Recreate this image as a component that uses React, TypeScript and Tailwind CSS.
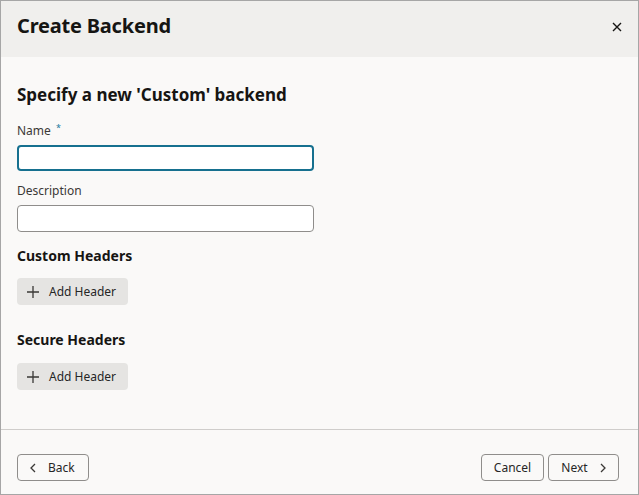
import React from 'react';

const font = { fontFamily: '"Noto Sans", "Open Sans", sans-serif' };

const PlusIcon = () => (
    <svg width="14" height="14" viewBox="0 0 14 14" fill="none" stroke="#3a3836" strokeWidth="1.3">
        <path d="M7 1v12M1 7h12" />
    </svg>
);

const AddHeaderButton = () => (
    <button className="flex items-center gap-[9px] h-[27px] w-[111px] pl-[9px] bg-[#e5e4e2] rounded-[4px] text-[12px] text-[#262626]">
        <PlusIcon />
        <span>Add Header</span>
    </button>
);

export default function App() {
    return (
        <div style={font} className="w-[639px] h-[495px] border border-[#a6a6a6] bg-[#faf9f8] flex flex-col text-[#161513]">
            {/* header */}
            <div className="h-[56px] bg-[#f0efed] flex items-center justify-between pl-4 pr-[16px]">
                <h1 className="text-[20px] font-bold tracking-[-0.2px] -mt-[6px]">Create Backend</h1>
                <button className="-mt-[5px] text-[#161513]">
                    <svg width="10" height="10" viewBox="0 0 10 10" stroke="currentColor" strokeWidth="1.4">
                        <path d="M1 1l8 8M9 1l-8 8" />
                    </svg>
                </button>
            </div>

            {/* body */}
            <div className="flex-1 px-4 pt-[26px] flex flex-col">
                <h2 className="text-[17px] leading-[24px] font-bold">Specify a new 'Custom' backend</h2>

                <label className="mt-[16px] text-[12px] leading-[16px] text-[#3a3836]">
                    Name <span className="text-[#227a9e] text-[9px] align-top relative -top-[3px] ml-[2px]">*</span>
                </label>
                <input className="mt-[6px] w-[297px] h-[26px] bg-white border-2 border-[#16708f] rounded-[4px] outline-none" />

                <label className="mt-[12px] text-[12px] leading-[16px] text-[#3a3836]">Description</label>
                <input className="mt-[6px] w-[297px] h-[27px] bg-white border border-[#8f8d8b] rounded-[4px] outline-none" />

                <h3 className="mt-[14px] text-[14px] leading-[20px] font-bold">Custom Headers</h3>
                <div className="mt-[12px]"><AddHeaderButton /></div>

                <h3 className="mt-[25px] text-[14px] leading-[20px] font-bold">Secure Headers</h3>
                <div className="mt-[13px]"><AddHeaderButton /></div>
            </div>

            {/* footer */}
            <div className="h-[65px] border-t border-[#cfcdcb] flex items-start justify-between pl-4 pr-[19px] pt-[24px]">
                <button className="flex items-center gap-[12px] h-[27px] w-[72px] pl-[12px] border border-[#8f8d8b] rounded-[4px] text-[12px] text-[#262626]">
                    <svg width="6" height="10" viewBox="0 0 6 10" fill="none" stroke="#3a3836" strokeWidth="1.3">
                        <path d="M5 1L1 5l4 4" />
                    </svg>
                    <span>Back</span>
                </button>
                <div className="flex gap-[4px]">
                    <button className="h-[27px] w-[63px] border border-[#8f8d8b] rounded-[4px] text-[12px] text-[#262626]">Cancel</button>
                    <button className="flex items-center justify-center gap-[12px] h-[27px] w-[71px] border border-[#8f8d8b] rounded-[4px] text-[12px] text-[#262626]">
                        <span>Next</span>
                        <svg width="6" height="10" viewBox="0 0 6 10" fill="none" stroke="#3a3836" strokeWidth="1.3">
                            <path d="M1 1l4 4-4 4" />
                        </svg>
                    </button>
                </div>
            </div>
        </div>
    );
}
